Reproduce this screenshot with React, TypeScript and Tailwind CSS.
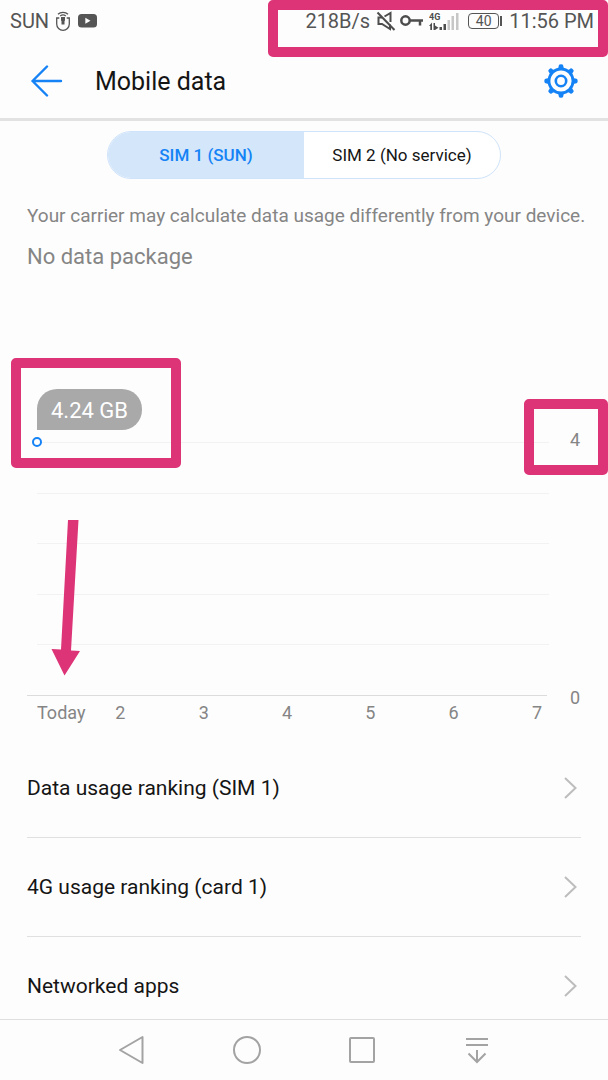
import React, { useState } from 'react';

const SIMS = ['SIM 1 (SUN)', 'SIM 2 (No service)'];
const DAYS = ['Today', '2', '3', '4', '5', '6', '7'];
const LINKS = ['Data usage ranking (SIM 1)', '4G usage ranking (card 1)', 'Networked apps'];

function HotspotIcon() {
    return (
        <svg width="16" height="21" viewBox="0 0 16 21" fill="none" stroke="#555" strokeWidth="1.3" aria-hidden="true">
            <path d="M3 3.200C5.500.700 10.500.700 13 3.200M5.200 5c1.600-1.300 4-1.300 5.600 0" />
            <path d="M4.300 7H1.700v6a6.300 6.300 0 0 0 12.600 0V7h-2.600" />
            <path d="M6 6h4v3.500l-.5.500v3.500h-3V10L6 9.500z" fill="#555" stroke="none" />
        </svg>
    );
}

function VideoIcon() {
    return (
        <svg width="19" height="14" viewBox="0 0 19 14" aria-hidden="true">
            <rect width="19" height="13.500" rx="3.500" fill="#555" />
            <path d="M7.300 3.800v6l5.200-3z" fill="#fdfdfd" />
        </svg>
    );
}

function MuteIcon() {
    return (
        <svg width="20" height="20" viewBox="0 0 20 20" fill="none" stroke="#4d4d4d" strokeWidth="2" aria-hidden="true">
            <path d="M6 6.500H2.500v6.500H6l8 5v-4.500M8.500 5.500L14.500 2v9" />
            <path d="M1.500 1.500L18.500 19" />
        </svg>
    );
}

function KeyIcon() {
    return (
        <svg width="23" height="12" viewBox="0 0 23 12" fill="none" stroke="#4d4d4d" strokeWidth="2.500" aria-hidden="true">
            <circle cx="5.500" cy="5.500" r="4.200" />
            <path d="M9.500 5.500H23M20 5.500v5" />
        </svg>
    );
}

function SignalIcon() {
    return (
        <svg width="31" height="19" viewBox="0 0 31 19" fill="#4d4d4d" aria-hidden="true">
            <text x="0" y="8" fontSize="9" fontWeight="700" fontFamily="Roboto, sans-serif">4G</text>
            <path d="M0 14l3-3.500V18H1.300v-4zM4.500 11H6v7H4.500zM6 18v-4.500l3.500 2.300z" />
            <rect x="10.500" y="15" width="2.500" height="3" />
            <rect x="14.500" y="12" width="2.500" height="6" />
            <g fill="#c6c6c6">
                <rect x="18.500" y="8" width="2.500" height="10" />
                <rect x="22.500" y="4" width="2.500" height="14" />
                <rect x="27" y="1" width="2.500" height="17" />
            </g>
        </svg>
    );
}

function GearIcon() {
    return (
        <svg width="34" height="34" viewBox="0 0 34 34" fill="none" stroke="#1583f5" aria-hidden="true">
            <circle cx="17" cy="17" r="12" strokeWidth="2.800" />
            <circle cx="17" cy="17" r="5.200" strokeWidth="2.600" />
            {[0, 45, 90, 135, 180, 225, 270, 315].map((angle) => (
                <path key={angle} d="M13 5.200Q14.800 4.300 14.800 1.500Q15 .300 17 .300T19.200 1.500Q19.200 4.300 21 5.200z" fill="#1583f5" stroke="none" transform={`rotate(${angle} 17 17)`} />
            ))}
        </svg>
    );
}

function StatusBar() {
    return (
        <div className="relative flex h-11 shrink-0 justify-between pt-[9px] pr-[14px] pl-[10px] text-xl leading-6 text-[#555]">
            <div className="flex h-6 items-center">
                <span className="mr-[6px]">SUN</span>
                <HotspotIcon />
                <span className="ml-[7px]"><VideoIcon /></span>
            </div>
            <div className="flex h-6 items-center">
                <span>218B/s</span>
                <span className="ml-[6px]"><MuteIcon /></span>
                <span className="ml-1"><KeyIcon /></span>
                <span className="ml-[6px]"><SignalIcon /></span>
                <span className="ml-2 flex h-4 w-[31px] items-center justify-center rounded-sm border border-[#555] text-sm">40</span>
                <span className="ml-px h-[10px] w-[2px] bg-[#555]" />
                <span className="ml-[7px]">11:56 PM</span>
            </div>
            <div className="pointer-events-none absolute top-0 right-0 h-[57px] w-[340px] rounded-[5px] border-[10px] border-[#dd3377]" />
        </div>
    );
}

function UsageChart() {
    return (
        <section className="relative pt-[157px]">
            <div className="flex text-lg leading-6 text-[#858585]">
                <div className="flex-1 pt-[14px] pl-[27px]">
                    <div className="flex h-[254px] flex-col justify-between">
                        {[5, 4, 3, 2, 1].map((line) => (
                            <div key={line} className="-mr-[2px] ml-[10px] h-px bg-[#f2f2f2]" />
                        ))}
                        <div className="h-px bg-[#dcdcdc]" />
                    </div>
                    <div className="mt-[5px] flex pr-[5px] pl-[5px]">
                        {DAYS.map((day) => (
                            <span key={day} className="flex-1 first:indent-[5px] last:flex-none">{day}</span>
                        ))}
                    </div>
                </div>
                <div className="flex w-[61px] flex-col justify-between pb-[15px] pl-[23px]">
                    <span>4</span>
                    <span>0</span>
                </div>
            </div>
            <span className="absolute top-[118px] left-[37px] flex h-[41px] items-center rounded-[20px] rounded-bl-none bg-[#a9a9a9] px-[14px] pt-[2px] text-[22px] text-white">
                4.24 GB
            </span>
            <span className="absolute top-[166px] left-8 size-[10px] rounded-full border-2 border-[#1583f5] bg-white" />
            <div className="pointer-events-none absolute top-[87px] left-[11px] h-[110px] w-[170px] rounded-[5px] border-[10px] border-[#dd3377]" />
            <div className="pointer-events-none absolute top-[128px] right-0 h-[76px] w-[84px] rounded-[5px] border-[10px] border-[#dd3377]" />
            <svg className="pointer-events-none absolute top-[248px] left-[50px]" width="32" height="158" viewBox="0 0 32 158" aria-hidden="true">
                <path d="M18 1h10.500L21 131.500l9 .5-15.500 24.500L1.500 130l9.500.5z" fill="#dd3377" />
            </svg>
        </section>
    );
}

export default function App() {
    const [sim, setSim] = useState(SIMS[0]);

    return (
        <div className="flex h-screen flex-col overflow-hidden bg-[#fdfdfd] font-[Roboto,sans-serif] text-[#151515]">
            <StatusBar />
            <header className="flex h-[77px] shrink-0 items-center border-b-[3px] border-[#e2e2e2] pr-[30px] pl-[30px]">
                <button type="button" aria-label="Back">
                    <svg width="33" height="32" viewBox="0 0 33 32" fill="none" stroke="#1583f5" strokeWidth="2.400" strokeLinecap="round" strokeLinejoin="round" aria-hidden="true">
                        <path d="M17 1.500L2.500 16 17 30.500M2.500 16H31" />
                    </svg>
                </button>
                <h1 className="ml-8 flex-1 pt-[2px] text-[25px] leading-8">Mobile data</h1>
                <button type="button" aria-label="Settings"><GearIcon /></button>
            </header>
            <main className="min-h-0 flex-1 overflow-hidden">
                <div className="mx-[107px] mt-[10px] flex h-12 overflow-hidden rounded-full border border-[#cfe3fa] bg-white">
                    {SIMS.map((name) => (
                        <button
                            key={name}
                            type="button"
                            aria-pressed={sim === name}
                            onClick={() => setSim(name)}
                            className={sim === name ? 'flex-1 bg-[#d4e6fa] pt-[2px] text-[17px] font-medium text-[#1583f5]' : 'flex-1 pt-[2px] text-[17px]'}
                        >
                            {name}
                        </button>
                    ))}
                </div>
                <p className="mt-[23px] ml-[27px] text-[19px] leading-7 whitespace-nowrap text-[#858585]">
                    Your carrier may calculate data usage differently from your device.
                </p>
                <p className="mt-[13px] ml-[27px] text-[22px] leading-7 text-[#858585]">No data package</p>
                <UsageChart />
                <ul className="mx-[27px] mt-[14px]">
                    {LINKS.map((label) => (
                        <li key={label} className="border-b border-[#e0e0e0]">
                            <button type="button" className="flex h-[98px] w-full items-center justify-between text-left text-[21px]">
                                <span className="pt-[2px]">{label}</span>
                                <svg className="mr-1" width="13" height="22" viewBox="0 0 13 22" fill="none" stroke="#bdbdbd" strokeWidth="2" aria-hidden="true">
                                    <path d="M1 1l10.500 10L1 21" />
                                </svg>
                            </button>
                        </li>
                    ))}
                </ul>
            </main>
            <nav className="flex h-[61px] shrink-0 items-center justify-between border-t border-[#dfdfdf] px-[117px]">
                <button type="button" aria-label="Back">
                    <svg width="28" height="30" viewBox="0 0 28 30" fill="none" stroke="#a3a3a3" strokeWidth="2" strokeLinejoin="round" aria-hidden="true">
                        <path d="M25.500 2v26L3 15z" />
                    </svg>
                </button>
                <button type="button" aria-label="Home">
                    <svg width="30" height="30" viewBox="0 0 30 30" fill="none" stroke="#a3a3a3" strokeWidth="2" aria-hidden="true">
                        <circle cx="15" cy="15" r="13" />
                    </svg>
                </button>
                <button type="button" aria-label="Recent apps">
                    <svg width="28" height="28" viewBox="0 0 28 28" fill="none" stroke="#a3a3a3" strokeWidth="2" aria-hidden="true">
                        <rect x="2" y="2" width="24" height="24" rx="1" />
                    </svg>
                </button>
                <button type="button" aria-label="Notifications">
                    <svg width="28" height="28" viewBox="0 0 28 28" fill="none" stroke="#a3a3a3" strokeWidth="2" aria-hidden="true">
                        <path d="M3 3h22M3 9h22M14 14v12M5.500 17.500l8.500 8.500 8.500-8.500" />
                    </svg>
                </button>
            </nav>
        </div>
    );
}
